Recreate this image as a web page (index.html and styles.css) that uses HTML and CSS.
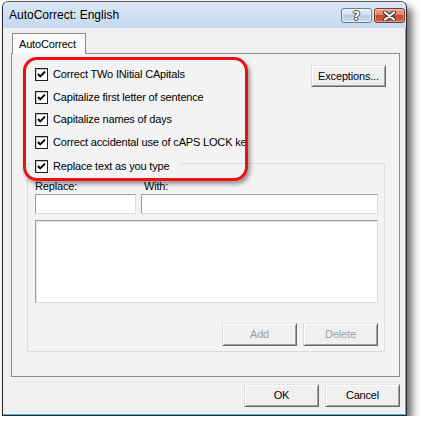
FILE: index.html
```html
<!DOCTYPE html>
<html>
<head>
<meta charset="utf-8">
<link rel="stylesheet" href="styles.css">
</head>
<body>
<div class="window">
  <div class="titlebar">
    <span class="title">AutoCorrect: English</span>
    <div class="caption-buttons">
      <span class="cap help"><span class="help-glyph">?</span></span>
      <span class="cap close">
        <svg width="13" height="10" viewBox="0 0 13 10">
          <path d="M2 1.5 L11 8.5 M11 1.5 L2 8.5" stroke="#3b3b3b" stroke-width="4.2" stroke-linecap="round" fill="none"/>
          <path d="M2 1.5 L11 8.5 M11 1.5 L2 8.5" stroke="#ffffff" stroke-width="2.2" stroke-linecap="round" fill="none"/>
        </svg>
      </span>
    </div>
  </div>
  <div class="client">
    <div class="tabs"><div class="tab">AutoCorrect</div></div>
    <div class="panel">
      <div class="top-section">
        <div class="options">
          <div class="row"><span class="check"><svg width="11" height="11" viewBox="0 0 11 11"><path d="M2 5 L4.2 7.4 L9 2.6" stroke="#000" stroke-width="2" fill="none"/></svg></span><span class="label">Correct TWo INitial CApitals</span></div>
          <div class="row"><span class="check"><svg width="11" height="11" viewBox="0 0 11 11"><path d="M2 5 L4.2 7.4 L9 2.6" stroke="#000" stroke-width="2" fill="none"/></svg></span><span class="label">Capitalize first letter of sentence</span></div>
          <div class="row"><span class="check"><svg width="11" height="11" viewBox="0 0 11 11"><path d="M2 5 L4.2 7.4 L9 2.6" stroke="#000" stroke-width="2" fill="none"/></svg></span><span class="label">Capitalize names of days</span></div>
          <div class="row"><span class="check"><svg width="11" height="11" viewBox="0 0 11 11"><path d="M2 5 L4.2 7.4 L9 2.6" stroke="#000" stroke-width="2" fill="none"/></svg></span><span class="label">Correct accidental use of cAPS LOCK key</span></div>
        </div>
        <span class="btn exceptions">Exceptions...</span>
      </div>
      <fieldset class="group">
        <legend class="legend"><span class="check"><svg width="11" height="11" viewBox="0 0 11 11"><path d="M2 5 L4.2 7.4 L9 2.6" stroke="#000" stroke-width="2" fill="none"/></svg></span><span class="label">Replace text as you type</span></legend>
        <div class="fields labels"><span>Replace:</span><span class="with-label">With:</span></div>
        <div class="fields inputs"><span class="input"></span><span class="input"></span></div>
        <div class="list"></div>
        <div class="group-buttons"><span class="btn disabled">Add</span><span class="btn disabled">Delete</span></div>
      </fieldset>
      <div class="highlight"></div>
    </div>
    <div class="footer"><span class="btn">OK</span><span class="btn">Cancel</span></div>
  </div>
</div>
</body>
</html>
```
FILE: styles.css
```css
* { box-sizing: border-box; }
html, body { margin: 0; padding: 0; background: #ffffff; }
body {
  font-family: "Liberation Sans", Arial, sans-serif;
  font-size: 11px;
  letter-spacing: -0.17px;
  color: #000;
}
.window {
  margin: 1px 0 0 2px;
  width: 405px;
  border: 1px solid #2a2a2a;
  border-top-color: #555a60;
  border-radius: 6px 6px 0 0;
  background: #c4d8ef;
  padding-bottom: 1px;
  box-shadow: 5px 6px 8px rgba(0,0,0,0.6), inset -1px -1px 0 #4cb6e4, inset 1px 0 0 #e4eefa;
}
.titlebar {
  height: 26px;
  display: flex;
  justify-content: space-between;
  align-items: flex-start;
  padding: 0 1px 0 6px;
  border-radius: 5px 5px 0 0;
  background: linear-gradient(#dbe7f5, #c4d8ee);
}
.title {
  font-size: 12px;
  letter-spacing: 0;
  line-height: 14px;
  margin-top: 6px;
  color: #000;
}
.caption-buttons {
  display: flex;
  gap: 2px;
  margin-top: 6px;
}
.cap {
  width: 31px;
  height: 15px;
  border: 1px solid #6b7b8f;
  border-radius: 3px;
  display: flex;
  align-items: center;
  justify-content: center;
}
.help {
  background: linear-gradient(#e7eef7 0%, #d3e0ef 45%, #bccde3 50%, #c9d9ec 100%);
  box-shadow: inset 0 0 0 1px rgba(255,255,255,0.6);
}
.help-glyph {
  font-family: "DejaVu Sans", sans-serif;
  font-weight: bold;
  font-size: 12px;
  letter-spacing: 0;
  line-height: 12px;
  color: #fff;
  text-shadow: 1px 0 0 #444, -1px 0 0 #444, 0 1px 0 #444, 0 -1px 0 #444;
}
.close {
  border-color: #7a3a2e;
  background: linear-gradient(#e8a493 0%, #d7826d 45%, #c4492f 50%, #cf6a4f 100%);
  box-shadow: inset 0 0 0 1px rgba(255,255,255,0.35);
}
.client {
  margin: 0 1px;
  background: #f0f0f0;
  padding: 5px 5px 7px 7px;
}
.tabs { display: flex; }
.tab {
  margin-left: 1px;
  margin-bottom: -1px;
  width: 74px;
  height: 21px;
  border: 1px solid #898c95;
  border-bottom: none;
  background: #fbfbfb;
  padding: 3px 0 0 6px;
  line-height: 14px;
  position: relative;
  z-index: 1;
}
.panel {
  position: relative;
  height: 324px;
  border: 1px solid #898c95;
  background: #f3f3f3;
}
.top-section { display: flex; }
.options {
  width: 236px;
  overflow: hidden;
  padding: 9px 0 0 23px;
  white-space: nowrap;
}
.row {
  height: 22.75px;
  display: flex;
  align-items: center;
  gap: 5px;
}
.check {
  flex: none;
  width: 13px;
  height: 13px;
  border: 1px solid #1f1f1f;
  background: #fff;
  box-shadow: inset 1px 1px 0 #c8c8c8;
  display: flex;
  align-items: center;
  justify-content: center;
}
.check svg { display: block; }
.label { line-height: 13px; }
.btn {
  width: 75px;
  height: 23px;
  display: flex;
  align-items: center;
  justify-content: center;
  background: #f0f0f0;
  border: 1px solid;
  border-color: #e6e6e6 #6a6a6a #6a6a6a #dcdcdc;
  box-shadow: inset 1px 1px 0 #ffffff, inset -1px -1px 0 #a0a0a0;
  line-height: 13px;
}
.exceptions {
  margin: 11px 13px 0 auto;
  height: 22px;
}
.disabled { color: #a0a0a0; }
.group {
  margin: 0 14px 0 15px;
  padding: 0 6px 5px 7px;
  border: 1px solid #d5dfe5;
  min-width: 0;
}
.legend {
  display: flex;
  align-items: center;
  gap: 5px;
  height: 19px;
  padding: 5px 11px 0 2px;
  margin-left: -2px;
  white-space: nowrap;
}
.fields {
  display: grid;
  grid-template-columns: 101px 237px;
  column-gap: 5px;
}
.labels {
  margin-top: 7px;
  line-height: 13px;
}
.with-label { padding-left: 3px; }
.inputs { margin-top: 1px; }
.input {
  height: 20px;
  background: #fff;
  border: 1px solid;
  border-color: #9c9c9c #dcdcdc #dcdcdc #9c9c9c;
}
.list {
  margin-top: 6px;
  width: 343px;
  height: 83px;
  background: #fff;
  border: 1px solid;
  border-color: #9c9c9c #dcdcdc #dcdcdc #9c9c9c;
  box-shadow: inset 1px 1px 0 #e4e4e4;
}
.group-buttons {
  margin-top: 20px;
  display: flex;
  justify-content: flex-end;
  gap: 6px;
}
.highlight {
  position: absolute;
  left: 11px;
  top: 3px;
  width: 225px;
  height: 124px;
  border: 3px solid #ee1010;
  border-radius: 14px;
  box-shadow: 2px 3px 4px rgba(0,0,0,0.4);
  pointer-events: none;
}
.footer {
  margin-top: 7px;
  display: flex;
  justify-content: flex-end;
  gap: 6px;
}
```
